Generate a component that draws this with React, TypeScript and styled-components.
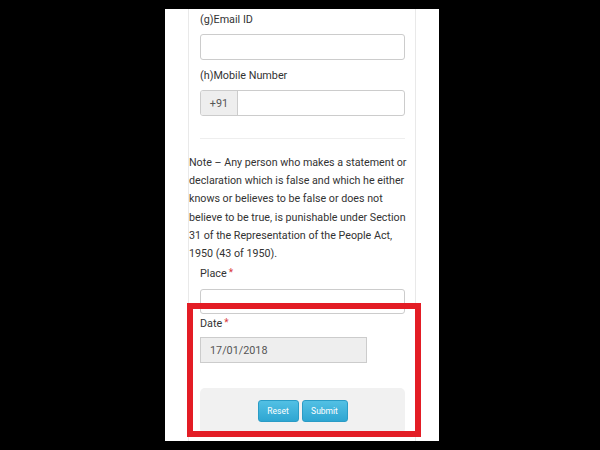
import React from 'react';
import styled, { createGlobalStyle } from 'styled-components';

const GlobalStyle = createGlobalStyle`
  html, body {
    margin: 0;
    padding: 0;
    background: #000;
  }
  body {
    font-family: Roboto, 'Noto Sans', 'Liberation Sans', sans-serif;
  }
  * {
    box-sizing: border-box;
  }
`

const Page = styled.div`
  position: relative;
  width: 600px;
  height: 450px;
  padding-top: 9px;
  background: #000;
  overflow: hidden;
`

const Screen = styled.div`
  margin-left: 165px;
  width: 274px;
  height: 432px;
  background: #fff;
  overflow: hidden;
`

const Panel = styled.div`
  margin-left: 23px;
  width: 228px;
  height: 100%;
  padding: 3px 10px 0 11px;
  border-left: 1px solid #e9e9e9;
  border-right: 1px solid #e9e9e9;
`

const Label = styled.div<{ $top?: number }>`
  margin-top: ${p => p.$top ?? 0}px;
  font-size: 10.8px;
  line-height: 16px;
  color: #333;
`

const Required = styled.span`
  margin-left: 2px;
  color: #d9383a;
  font-size: 10px;
  vertical-align: 1px;
`

const Input = styled.div<{ $top?: number; $height?: number }>`
  margin-top: ${p => p.$top ?? 0}px;
  height: ${p => p.$height ?? 26}px;
  border: 1px solid #ccc;
  border-radius: 3px;
  background: #fff;
`

const InputGroup = styled.div`
  display: flex;
  margin-top: 6px;
  height: 26px;
  border: 1px solid #ccc;
  border-radius: 3px;
  overflow: hidden;
`

const Addon = styled.div`
  display: flex;
  align-items: center;
  justify-content: center;
  width: 37px;
  background: #eee;
  border-right: 1px solid #ccc;
  font-size: 10.8px;
  color: #555;
`

const Divider = styled.div`
  margin-top: 22px;
  height: 1px;
  background: #eee;
`

const Note = styled.p`
  margin: 15px -10px 0 -11px;
  font-size: 10.7px;
  line-height: 18.2px;
  color: #333;
`

const DateField = styled.div`
  display: flex;
  align-items: center;
  margin-top: 5px;
  width: 167px;
  height: 26px;
  padding-left: 9px;
  background: #eee;
  border: 1px solid #ccc;
  font-size: 10.8px;
  color: #555;
`

const Actions = styled.div`
  display: flex;
  justify-content: center;
  gap: 3px;
  margin-top: 25px;
  height: 46px;
  padding-top: 12px;
  background: #f1f1f1;
  border-radius: 5px;
`

const Button = styled.button<{ $width: number }>`
  width: ${p => p.$width}px;
  height: 22px;
  padding: 0;
  border: 1px solid #2a9cc6;
  border-radius: 3px;
  background: linear-gradient(#52c0e4, #2ea6d2);
  color: #fff;
  font-family: inherit;
  font-size: 8.5px;
`

const Highlight = styled.div`
  position: absolute;
  left: 187px;
  top: 303px;
  width: 234px;
  height: 134px;
  border: 6px solid #e31d25;
  pointer-events: none;
`

export default function App() {
  return (
    <Page>
      <GlobalStyle />
      <Screen>
        <Panel>
          <Label>(g)Email ID</Label>
          <Input $top={6} />
          <Label $top={8}>(h)Mobile Number</Label>
          <InputGroup>
            <Addon>+91</Addon>
          </InputGroup>
          <Divider />
          <Note>
            Note – Any person who makes a statement or declaration which is false and which he either
            knows or believes to be false or does not believe to be true, is punishable under Section
            31 of the Representation of the People Act, 1950 (43 of 1950).
          </Note>
          <Label $top={2}>Place<Required>*</Required></Label>
          <Input $top={7} $height={25} />
          <Label $top={1}>Date<Required>*</Required></Label>
          <DateField>17/01/2018</DateField>
          <Actions>
            <Button $width={41}>Reset</Button>
            <Button $width={46}>Submit</Button>
          </Actions>
        </Panel>
      </Screen>
      <Highlight />
    </Page>
  )
}
